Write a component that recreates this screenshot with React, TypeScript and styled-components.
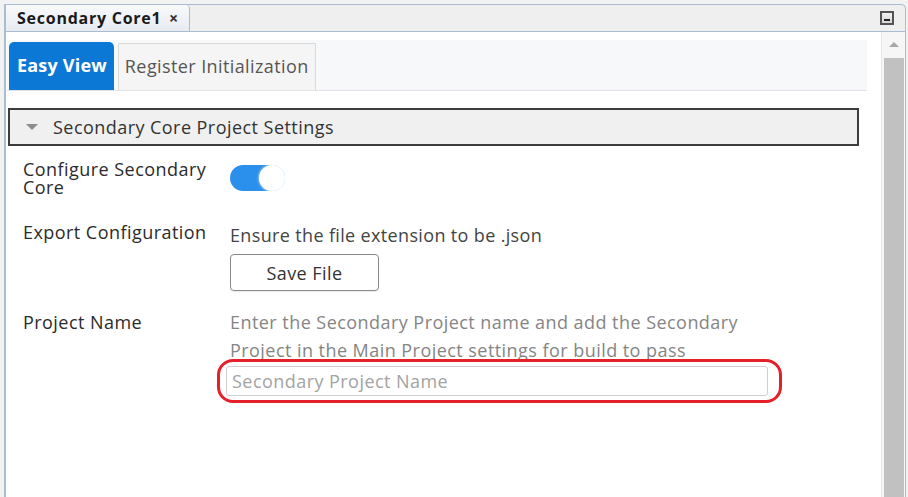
import styled, { createGlobalStyle } from "styled-components";

const GlobalStyle = createGlobalStyle`
	html, body {
		margin: 0;
		padding: 0;
	}
	body {
		background: #f2f2f2;
		font-family: "Open Sans", "Noto Sans", sans-serif;
		letter-spacing: 0.45px;
		color: #2b2b2b;
	}
`;

function App() {
	return (
		<>
			<GlobalStyle />
			<Frame>
				<Pane>
					<Header>
						<DocTab>
							Secondary Core1 <Close>×</Close>
						</DocTab>
						<MinButton />
					</Header>

					<Body>
						<Main>
							<SubTabs>
								<SubTab active>Easy View</SubTab>
								<SubTab>Register Initialization</SubTab>
							</SubTabs>

							<Section>
								<Caret />
								Secondary Core Project Settings
							</Section>

							<Form>
								<Row gap={14}>
									<Label lh={18}>Configure Secondary Core</Label>
									<Toggle>
										<Knob />
									</Toggle>
								</Row>

								<Row gap={25}>
									<Label lh={22}>Export Configuration</Label>
									<Value>
										<Hint>Ensure the file extension to be .json</Hint>
										<Button>Save File</Button>
									</Value>
								</Row>

								<Row gap={20}>
									<Label lh={22}>Project Name</Label>
									<Value>
										<Hint muted>
											Enter the Secondary Project name and add the Secondary
											Project in the Main Project settings for build to pass
										</Hint>
										<InputWrap>
											<TextInput placeholder="Secondary Project Name" />
										</InputWrap>
									</Value>
								</Row>
							</Form>
						</Main>

						<Scrollbar>
							<UpArrow />
							<Thumb />
						</Scrollbar>
					</Body>
				</Pane>
			</Frame>
		</>
	);
}

const Frame = styled.div`
	box-sizing: border-box;
	width: 908px;
	height: 497px;
	padding: 4px 2px 0 4px;
	display: flex;
`;

const Pane = styled.div`
	flex: 1;
	display: flex;
	flex-direction: column;
	border: 1px solid #a9bcd2;
	border-left-width: 2px;
	border-bottom: none;
	border-radius: 0 5px 0 0;
	background: #efefef;
	overflow: hidden;
`;

const Header = styled.div`
	height: 26px;
	display: flex;
	justify-content: space-between;
	border-bottom: 1px solid #a9bcd2;
`;

const DocTab = styled.div`
	width: 184px;
	box-sizing: border-box;
	display: flex;
	align-items: center;
	justify-content: space-between;
	padding: 0 10px 0 11px;
	font-size: 16px;
	font-weight: 700;
	letter-spacing: 0.75px;
	color: #1a1a1a;
	background: linear-gradient(#f8f9fb, #e7ebf1);
	border-right: 1px solid #a9bcd2;
	border-radius: 0 4px 0 0;
`;

const Close = styled.span`
	font-size: 16px;
	color: #333;
`;

const MinButton = styled.div`
	box-sizing: border-box;
	width: 14px;
	height: 14px;
	margin: 6px 11px 0 0;
	border: 2px solid #545454;
	background: linear-gradient(#f2f2f2, #d6d6d6);
	display: flex;
	align-items: flex-end;
	justify-content: center;

	&::after {
		content: "";
		width: 6px;
		height: 2px;
		margin-bottom: 2px;
		background: #222;
	}
`;

const Body = styled.div`
	flex: 1;
	min-height: 0;
	display: flex;
	background: #fff;
`;

const Main = styled.div`
	flex: 1;
	padding: 8px 14px 0 1px;
`;

const SubTabs = styled.div`
	height: 50px;
	display: flex;
	align-items: flex-end;
	gap: 4px;
	padding-left: 2px;
	background: #f7f8fa;
	border-bottom: 1px solid #e1e3e7;
`;

const SubTab = styled.div<{ active?: boolean }>`
	box-sizing: border-box;
	height: ${props => (props.active ? "48px" : "47px")};
	display: flex;
	align-items: center;
	padding: ${props => (props.active ? "0 7px 3px 8px" : "0 6px 2px")};
	font-size: 18px;
	letter-spacing: ${props => (props.active ? "0.2px" : "0.4px")};
	font-weight: ${props => (props.active ? 700 : 400)};
	color: ${props => (props.active ? "#fff" : "#555")};
	background: ${props => (props.active ? "#0a78d4" : "#f5f5f5")};
	border: ${props => (props.active ? "none" : "1px solid #dadada")};
	border-bottom: none;
	border-radius: ${props => (props.active ? "5px 5px 0 0" : "0")};
`;

const Section = styled.div`
	box-sizing: border-box;
	height: 38px;
	margin: 17px 8px 0 1px;
	padding-left: 16px;
	display: flex;
	align-items: center;
	gap: 15px;
	border: 2px solid #3c3c3c;
	background: #f0f0f0;
	font-size: 18px;
	color: #333;
`;

const Caret = styled.span`
	width: 0;
	height: 0;
	border-left: 6px solid transparent;
	border-right: 6px solid transparent;
	border-top: 6px solid #8c8c8c;
`;

const Form = styled.div`
	padding-left: 16px;
`;

const Row = styled.div<{ gap: number }>`
	display: grid;
	grid-template-columns: 207px 1fr;
	margin-top: ${props => props.gap}px;
`;

const Label = styled.div<{ lh: number }>`
	max-width: 195px;
	font-size: 18px;
	line-height: ${props => props.lh}px;
	color: #2b2b2b;
`;

const Value = styled.div`
	display: flex;
	flex-direction: column;
	align-items: flex-start;
`;

const Hint = styled.div<{ muted?: boolean }>`
	max-width: 545px;
	font-size: 18px;
	letter-spacing: ${props => (props.muted ? "0.45px" : "0.35px")};
	line-height: ${props => (props.muted ? "28px" : "22px")};
	margin-top: ${props => (props.muted ? "-3px" : "3px")};
	color: ${props => (props.muted ? "#858585" : "#444")};
`;

const Toggle = styled.div`
	position: relative;
	align-self: center;
	width: 55px;
	height: 26px;
	border-radius: 13px;
	background: #2b8fec;
`;

const Knob = styled.span`
	position: absolute;
	right: 0;
	top: 0;
	width: 26px;
	height: 26px;
	border-radius: 50%;
	background: #fff;
	box-shadow: 0 0 3px rgba(255, 255, 255, 0.9);
`;

const Button = styled.button`
	box-sizing: border-box;
	width: 149px;
	height: 37px;
	margin-top: 8px;
	border: 1px solid #8a8a8a;
	border-radius: 4px;
	background: #fff;
	box-shadow: 0 1px 1px rgba(0, 0, 0, 0.08);
	font-family: "Open Sans", "Noto Sans", sans-serif;
	font-size: 18px;
	letter-spacing: 0.45px;
	color: #333;
`;

const InputWrap = styled.div`
	position: relative;
	margin: 2px 0 0 -4px;

	/* red annotation ring drawn over the field */
	&::after {
		content: "";
		position: absolute;
		inset: -7px -14px -7px -9px;
		border: 3px solid #e5202a;
		border-radius: 16px;
		pointer-events: none;
	}
`;

const TextInput = styled.input`
	box-sizing: border-box;
	display: block;
	width: 542px;
	height: 30px;
	padding: 0 5px;
	border: 1px solid #cfcfcf;
	border-radius: 3px;
	font-family: "Open Sans", "Noto Sans", sans-serif;
	font-size: 18px;
	letter-spacing: 0.45px;
	color: #333;
	outline: none;

	&::placeholder {
		color: #a3a3a3;
	}
`;

const Scrollbar = styled.div`
	box-sizing: border-box;
	width: 24px;
	display: flex;
	flex-direction: column;
	align-items: center;
	padding: 0 1px 0 2px;
	border-left: 1px solid #e6e6e6;
	background: #f6f6f6;
`;

const UpArrow = styled.span`
	margin-top: 10px;
	width: 0;
	height: 0;
	border-left: 5px solid transparent;
	border-right: 5px solid transparent;
	border-bottom: 5px solid #a6a6a6;
`;

const Thumb = styled.div`
	flex: 1;
	align-self: stretch;
	margin-top: 11px;
	background: #c1c1c1;
`;

export default App;
